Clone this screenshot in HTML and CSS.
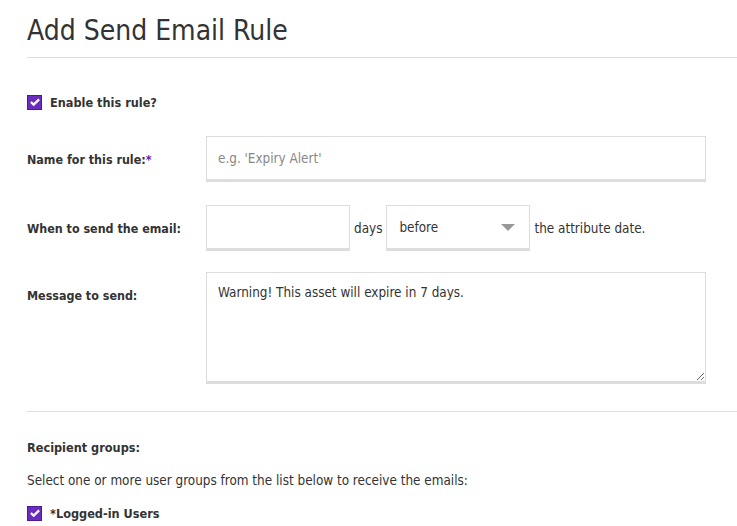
FILE: index.html
```html
<!DOCTYPE html>
<html lang="en">
<head>
    <meta charset="UTF-8">
    <meta name="viewport" content="width=device-width, initial-scale=1.0">
    <title>Add Send Email Rule</title>
    <link rel="stylesheet" href="styles.css">
</head>
<body>
    <h1 class="page-title">Add Send Email Rule</h1>
    <form class="rule-form">
        <label class="check-row">
            <span class="check-box"><svg viewBox="0 0 16 16" width="12" height="12"><path d="M2.5 8 L6.2 11.5 L13.5 4.5" fill="none" stroke="#fff" stroke-width="3"/></svg></span>
            <span class="check-label">Enable this rule?</span>
        </label>

        <div class="form-row">
            <label class="field-label">Name for this rule:<span class="req">*</span></label>
            <input class="text-input wide" type="text" placeholder="e.g. 'Expiry Alert'">
        </div>

        <div class="form-row">
            <label class="field-label">When to send the email:</label>
            <div class="inline-group">
                <input class="text-input short" type="text">
                <span class="inline-text">days</span>
                <div class="select-box">
                    <span>before</span>
                    <span class="caret"></span>
                </div>
                <span class="inline-text">the attribute date.</span>
            </div>
        </div>

        <div class="form-row top">
            <label class="field-label">Message to send:</label>
            <textarea class="text-input area">Warning! This asset will expire in 7 days.</textarea>
        </div>

        <hr class="divider">

        <p class="section-label">Recipient groups:</p>
        <p class="help-text">Select one or more user groups from the list below to receive the emails:</p>
        <label class="check-row">
            <span class="check-box"><svg viewBox="0 0 16 16" width="12" height="12"><path d="M2.5 8 L6.2 11.5 L13.5 4.5" fill="none" stroke="#fff" stroke-width="3"/></svg></span>
            <span class="check-label">*Logged-in Users</span>
        </label>
    </form>
</body>
</html>
```

FILE: styles.css
```css
body {
    margin: 0;
    padding: 0 0 0 27px;
    font-family: "DejaVu Sans Condensed", "Liberation Sans", sans-serif;
    font-size: 13.4px;
    color: #333;
    background: #fff;
}
.page-title {
    margin: 0;
    padding-top: 14px;
    height: 43px;
    font-size: 28px;
    font-weight: normal;
    color: #333;
    border-bottom: 1px solid #ddd;
}
.rule-form {
    padding-top: 36px;
}
.check-row {
    display: flex;
    align-items: center;
    gap: 8px;
    height: 16px;
}
.check-box {
    width: 15px;
    height: 15px;
    background: #6a2bbf;
    border: 1px solid #4b1a94;
    box-sizing: border-box;
    display: flex;
    align-items: center;
    justify-content: center;
}
.check-label {
    font-weight: bold;
    font-size: 12.6px;
}
.form-row {
    display: flex;
    align-items: center;
    margin-top: 23px;
}
.rule-form > .check-row + .form-row {
    margin-top: 26px;
}
.form-row.top {
    align-items: flex-start;
    margin-top: 21px;
}
.form-row.top .field-label {
    padding-top: 16px;
}
.field-label {
    width: 179px;
    flex-shrink: 0;
    font-weight: bold;
    font-size: 12.4px;
}
.req {
    color: #5a22a8;
}
.text-input {
    box-sizing: border-box;
    height: 46px;
    border: 1px solid #ddd;
    border-bottom: 3px solid #ddd;
    padding: 0 11px;
    font-family: inherit;
    font-size: 13.4px;
    color: #333;
    background: #fff;
}
.text-input::placeholder {
    color: #888;
}
.wide {
    width: 500px;
}
.short {
    width: 144px;
}
.area {
    width: 500px;
    height: 112px;
    padding: 12px 11px;
    resize: vertical;
}
.inline-group {
    display: flex;
    align-items: center;
}
.inline-text {
    margin: 0 4px;
}
.select-box {
    box-sizing: border-box;
    width: 144px;
    height: 46px;
    border: 1px solid #ddd;
    border-bottom: 3px solid #ddd;
    padding: 0 12px;
    display: flex;
    align-items: center;
    justify-content: space-between;
}
.caret {
    width: 0;
    height: 0;
    border-left: 7px solid transparent;
    border-right: 7px solid transparent;
    border-top: 7px solid #999;
    margin-right: 2px;
}
.divider {
    border: 0;
    border-top: 1px solid #ddd;
    margin: 27px 0 0;
}
.section-label {
    font-weight: bold;
    font-size: 12.6px;
    margin: 28px 0 0;
}
.help-text {
    margin: 18px 0 17px;
}
```
